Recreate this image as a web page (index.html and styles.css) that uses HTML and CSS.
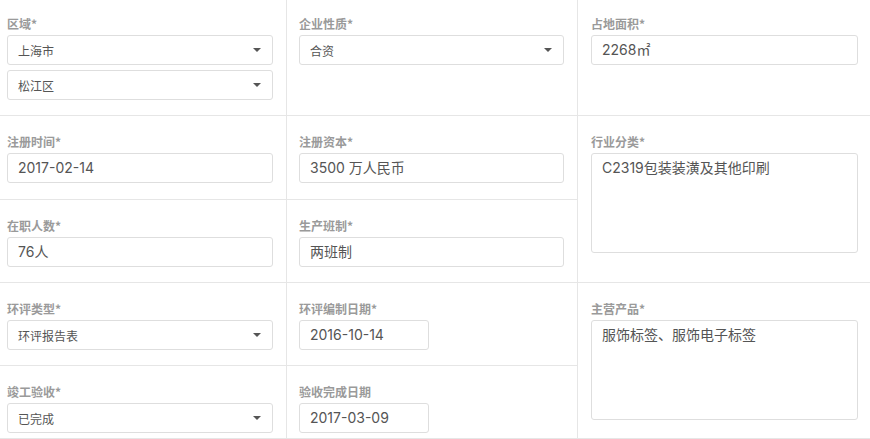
FILE: index.html
```html
<!DOCTYPE html>
<html lang="zh-CN">
<head>
  <meta charset="UTF-8">
  <meta name="viewport" content="width=device-width, initial-scale=1.0">
  <title>企业基本信息</title>
  <link rel="stylesheet" href="styles.css">
</head>
<body>
  <div class="info-grid">
    <!-- row 1 -->
    <div class="cell first-col first-row">
      <label class="field-label">区域*</label>
      <div class="select-box"><span>上海市</span><i class="caret"></i></div>
      <div class="select-box"><span>松江区</span><i class="caret"></i></div>
    </div>
    <div class="cell first-row">
      <label class="field-label">企业性质*</label>
      <div class="select-box"><span>合资</span><i class="caret"></i></div>
    </div>
    <div class="cell first-row last-col">
      <label class="field-label">占地面积*</label>
      <div class="text-box">2268㎡</div>
    </div>

    <!-- row 2 -->
    <div class="cell first-col">
      <label class="field-label">注册时间*</label>
      <div class="text-box">2017-02-14</div>
    </div>
    <div class="cell">
      <label class="field-label">注册资本*</label>
      <div class="text-box">3500 万人民币</div>
    </div>
    <div class="cell last-col span-2">
      <label class="field-label">行业分类*</label>
      <div class="area-box">C2319包装装潢及其他印刷</div>
    </div>

    <!-- row 3 -->
    <div class="cell first-col">
      <label class="field-label">在职人数*</label>
      <div class="text-box">76人</div>
    </div>
    <div class="cell">
      <label class="field-label">生产班制*</label>
      <div class="text-box">两班制</div>
    </div>

    <!-- row 4 -->
    <div class="cell first-col">
      <label class="field-label">环评类型*</label>
      <div class="select-box"><span>环评报告表</span><i class="caret"></i></div>
    </div>
    <div class="cell">
      <label class="field-label">环评编制日期*</label>
      <div class="text-box date">2016-10-14</div>
    </div>
    <div class="cell last-col span-2">
      <label class="field-label">主营产品*</label>
      <div class="area-box">服饰标签、服饰电子标签</div>
    </div>

    <!-- row 5 -->
    <div class="cell first-col">
      <label class="field-label">竣工验收*</label>
      <div class="select-box"><span>已完成</span><i class="caret"></i></div>
    </div>
    <div class="cell">
      <label class="field-label">验收完成日期</label>
      <div class="text-box date">2017-03-09</div>
    </div>
  </div>
</body>
</html>
```

FILE: styles.css
```css
body {
  margin: 0;
  padding: 0;
  background: #fff;
  font-family: Inter, 'Noto Sans CJK SC', sans-serif;
  color: #555;
}

.info-grid {
  display: grid;
  grid-template-columns: 287px 291px 1fr;
  grid-template-rows: 116px 84px 83px 83px 1fr;
  min-height: 100vh;
}

.cell {
  border-right: 1px solid #e6e6e6;
  border-bottom: 1px solid #e6e6e6;
  padding: 17px 13px 0 12px;
  display: flex;
  flex-direction: column;
  align-items: flex-start;
}

.cell.first-col {
  padding-left: 7px;
}

.cell.first-row {
  padding-top: 15px;
}

.cell.last-col {
  border-right: none;
  padding-left: 13px;
  padding-right: 12px;
}

.cell.span-2 {
  grid-row: span 2;
}

.field-label {
  font-family: 'Noto Sans CJK SC', sans-serif;
  font-size: 12px;
  line-height: 17px;
  font-weight: 700;
  color: #9a9a9a;
  margin-bottom: 3px;
}

.select-box,
.text-box,
.area-box {
  box-sizing: border-box;
  width: 100%;
  border: 1px solid #dedede;
  border-radius: 3px;
  background: #fff;
  font-size: 14px;
  color: #555;
}

.select-box {
  height: 30px;
  padding: 0 11px 0 10px;
  display: flex;
  align-items: center;
  justify-content: space-between;
  font-size: 12px;
  font-family: 'Noto Sans CJK SC', sans-serif;
}

.select-box + .select-box {
  margin-top: 5px;
}

.caret {
  width: 0;
  height: 0;
  border-left: 4px solid transparent;
  border-right: 4px solid transparent;
  border-top: 4px solid #555;
}

.text-box {
  height: 30px;
  line-height: 28px;
  padding: 0 10px;
}

.text-box.date {
  width: 130px;
}

.area-box {
  height: 100px;
  padding: 4px 10px;
  line-height: 20px;
}
```
